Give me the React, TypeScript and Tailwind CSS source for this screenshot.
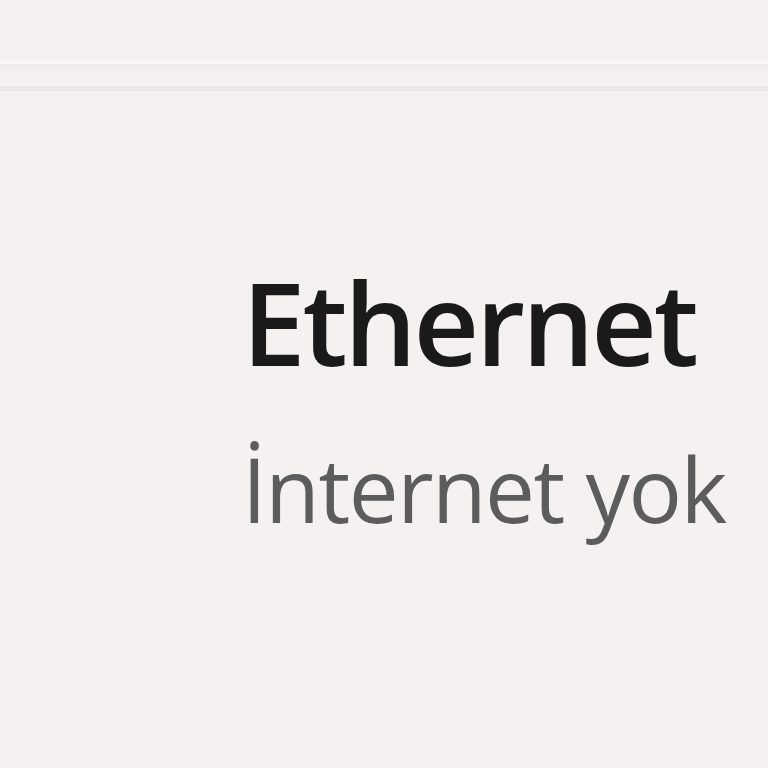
import React from 'react';

const App: React.FC = () => {
  return (
    <div className="w-[768px] h-[768px] overflow-hidden bg-[#f6f1f1] flex flex-col" style={{ fontFamily: '"Open Sans", "Noto Sans", sans-serif' }}>
      {/* top chrome */}
      <div className="h-[60px] bg-[#f4f1f0]" />
      <div className="h-[4px] bg-[#faf6f5]" />
      <div className="h-[6px] bg-[#f1eded]" />
      <div className="h-[16px] bg-[#f5f1f0]" />
      <div className="h-[5px] bg-[#ece7e7]" />

      {/* network status */}
      <div className="flex flex-col pl-[242px] pt-[166px]">
        <h1 className="text-[114px] leading-[130px] font-semibold text-[#1a1a1a] tracking-[-3.2px]">Ethernet</h1>
        <p className="text-[89px] leading-[100px] text-[#5c5c5c] mt-[52px] tracking-[-1.5px]">İnternet yok</p>
      </div>
    </div>
  );
};

export default App;
